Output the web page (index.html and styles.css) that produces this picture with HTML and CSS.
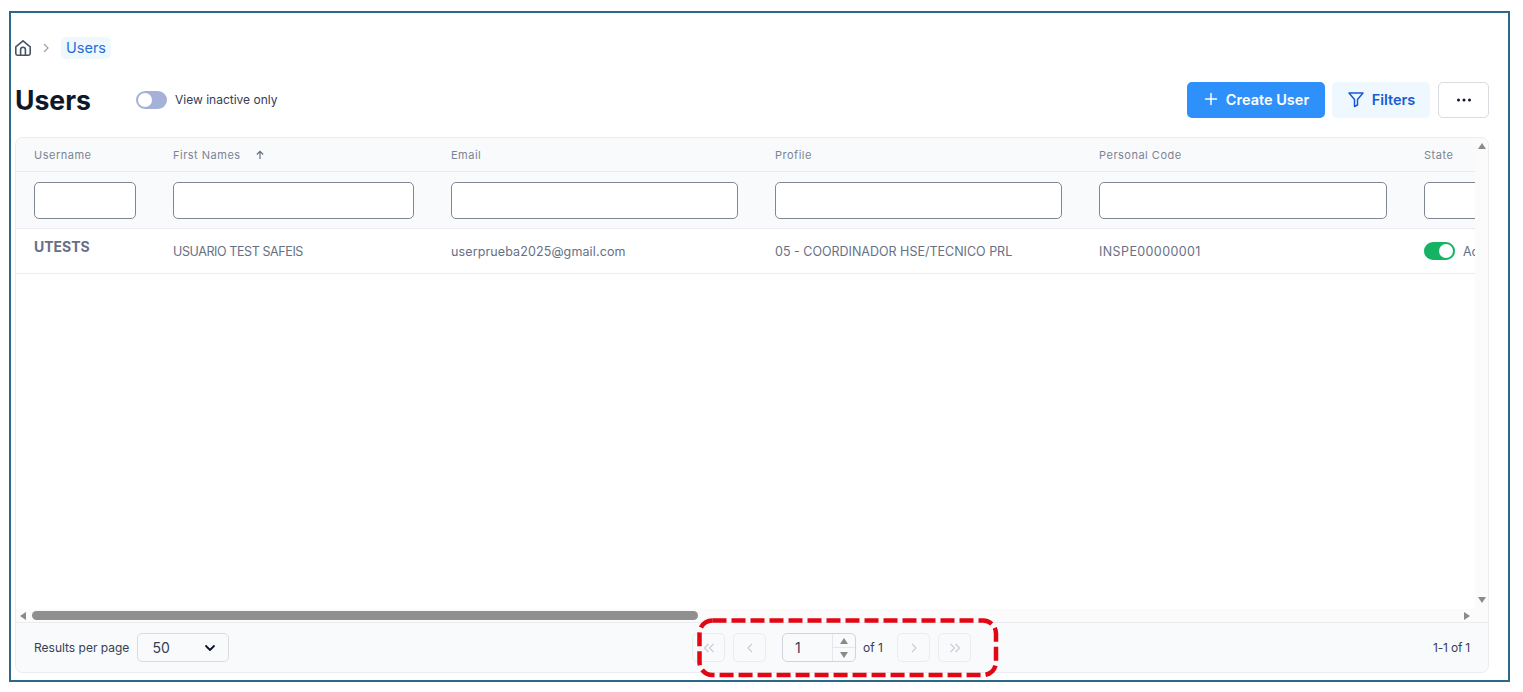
FILE: index.html
```html
<!DOCTYPE html>
<html>

<head>
    <meta charset="UTF-8">
    <meta name="viewport" content="width=device-width, initial-scale=1.0">
    <link rel="stylesheet" href="styles.css">
    <title>Users</title>
</head>

<body>
    <div class="frame">
        <nav class="crumbs">
            <svg class="home" width="16" height="16" viewBox="2 2 20 20" fill="none" stroke="#475467" stroke-width="2" stroke-linecap="round" stroke-linejoin="round">
                <path d="M3 10.5 12 3l9 7.5V19a2 2 0 0 1-2 2H5a2 2 0 0 1-2-2z" />
                <path d="M9 21v-7a3 3 0 0 1 6 0v7" />
            </svg>
            <svg class="crumb-sep" width="10" height="10" viewBox="0 0 10 10" fill="none" stroke="#98a2b3" stroke-width="1.2">
                <path d="M3 1l4 4-4 4" />
            </svg>
            <span class="crumb-current">Users</span>
        </nav>

        <header class="page-head">
            <h1>Users</h1>
            <label class="inactive">
                <span class="switch"><span class="knob"></span></span>
                <span class="inactive-text">View inactive only</span>
            </label>
            <div class="actions">
                <button class="btn btn-primary">
                    <svg width="16" height="16" viewBox="0 0 16 16" fill="none" stroke="#fff" stroke-width="1.5" stroke-linecap="round">
                        <path d="M8 2.5v11M2.5 8h11" />
                    </svg>
                    Create User
                </button>
                <button class="btn btn-soft">
                    <svg width="18" height="18" viewBox="0 0 18 18" fill="none" stroke="#175cd3" stroke-width="1.5" stroke-linejoin="round">
                        <path d="M2 3h14l-5.5 6.5V15l-3 1.500V9.500z" />
                    </svg>
                    Filters
                </button>
                <button class="btn btn-more">
                    <svg width="16" height="4" viewBox="0 0 16 4" fill="#101828">
                        <circle cx="2.500" cy="2" r="1.500" />
                        <circle cx="8" cy="2" r="1.500" />
                        <circle cx="13.500" cy="2" r="1.500" />
                    </svg>
                </button>
            </div>
        </header>

        <section class="card">
            <div class="card-body">
                <div class="table-view">
                    <div class="row row-head">
                        <div class="cell">Username</div>
                        <div class="cell">First Names
                            <svg class="sort" width="10" height="10" viewBox="0 0 10 10" fill="none" stroke="#667085" stroke-width="1.200">
                                <path d="M5 9V1.500M1.800 4.500 5 1.300l3.200 3.200" />
                            </svg>
                        </div>
                        <div class="cell">Email</div>
                        <div class="cell">Profile</div>
                        <div class="cell">Personal Code</div>
                        <div class="cell">State</div>
                    </div>
                    <div class="row row-filter">
                        <div class="cell"><input class="filter" type="text"></div>
                        <div class="cell"><input class="filter" type="text"></div>
                        <div class="cell"><input class="filter" type="text"></div>
                        <div class="cell"><input class="filter" type="text"></div>
                        <div class="cell"><input class="filter" type="text"></div>
                        <div class="cell"><input class="filter" type="text"></div>
                    </div>
                    <div class="row row-data">
                        <div class="cell cell-user">UTESTS</div>
                        <div class="cell cell-name">USUARIO TEST SAFEIS</div>
                        <div class="cell cell-email">userprueba2025@gmail.com</div>
                        <div class="cell">05 - COORDINADOR HSE/TECNICO PRL</div>
                        <div class="cell cell-code">INSPE00000001</div>
                        <div class="cell cell-state">
                            <span class="switch switch-on"><span class="knob"></span></span>
                            Active
                        </div>
                    </div>
                </div>

                <div class="vbar">
                    <span class="arrow arrow-up"></span>
                    <span class="arrow arrow-down"></span>
                </div>
                <div class="hbar">
                    <span class="arrow arrow-left"></span>
                    <span class="hthumb"></span>
                    <span class="arrow arrow-right"></span>
                </div>
            </div>

            <footer class="card-foot">
                <div class="per-page">
                    Results per page
                    <div class="select">
                        50
                        <svg width="12" height="8" viewBox="0 0 12 8" fill="none" stroke="#101828" stroke-width="1.800" stroke-linecap="round" stroke-linejoin="round">
                            <path d="M2 2l4 4 4-4" />
                        </svg>
                    </div>
                </div>
                <div class="pager">
                    <span class="page-btn">
                        <svg width="12" height="10" viewBox="0 0 12 10" fill="none" stroke="#c9ced6" stroke-width="1.200"><path d="M5.500 1 1.500 5l4 4M10.500 1l-4 4 4 4" /></svg>
                    </span>
                    <span class="page-btn page-gap">
                        <svg width="8" height="10" viewBox="0 0 8 10" fill="none" stroke="#c9ced6" stroke-width="1.200"><path d="M6 1 2 5l4 4" /></svg>
                    </span>
                    <div class="page-input">
                        <span class="page-num">1</span>
                        <div class="spin">
                            <span class="spin-part"><span class="arrow arrow-up"></span></span>
                            <span class="spin-part"><span class="arrow arrow-down"></span></span>
                        </div>
                    </div>
                    <span class="page-of">of 1</span>
                    <span class="page-btn">
                        <svg width="8" height="10" viewBox="0 0 8 10" fill="none" stroke="#c9ced6" stroke-width="1.200"><path d="M2 1l4 4-4 4" /></svg>
                    </span>
                    <span class="page-btn page-gap">
                        <svg width="12" height="10" viewBox="0 0 12 10" fill="none" stroke="#c9ced6" stroke-width="1.200"><path d="M1.500 1l4 4-4 4M6.500 1l4 4-4 4" /></svg>
                    </span>
                </div>
                <div class="count">1-1 of 1</div>
            </footer>
        </section>
    </div>

    <!-- annotation over the pager -->
    <svg class="callout" width="302" height="60" viewBox="0 0 302 60" fill="none">
        <rect x="2.500" y="2.500" width="296.500" height="54.500" rx="13" stroke="#e30613" stroke-width="4.500" stroke-dasharray="14 5" />
    </svg>
</body>

</html>
```

FILE: styles.css
```css
html,
body {
    width: 100%;
    height: 100%;
    margin: 0;
    padding: 0;
    background-color: #fff;
    overflow: hidden;
}

body {
    position: relative;
    font-family: "Inter", "Liberation Sans", sans-serif;
    color: #101828;
}

.frame {
    box-sizing: border-box;
    display: flex;
    flex-direction: column;
    width: 1501px;
    height: 671px;
    margin: 11px 0 0 9px;
    padding: 0 19px 7px 4px;
    border: 2px solid #2b6a86;
}

/* breadcrumb */
.crumbs {
    display: flex;
    align-items: center;
    height: 22px;
    margin-top: 24px;
}

.crumb-sep {
    margin: 0 10px;
}

.crumb-current {
    padding: 2px 5px;
    border-radius: 5px;
    background-color: #eff8ff;
    color: #1f6fd6;
    font-size: 14.500px;
    line-height: 18px;
}

/* title row */
.page-head {
    display: flex;
    align-items: center;
    height: 36px;
    margin-top: 23px;
}

.page-head h1 {
    width: 121px;
    margin: 0;
    font-size: 26.600px;
    font-weight: 700;
    line-height: 36px;
}

.inactive {
    display: flex;
    align-items: center;
    gap: 8px;
    font-size: 12px;
    color: #344054;
}

.inactive-text {
    margin-bottom: 2px;
}

.switch {
    box-sizing: border-box;
    display: flex;
    align-items: center;
    width: 31px;
    height: 18px;
    padding: 2px;
    border-radius: 9px;
    background-color: #a5b1d8;
}

.knob {
    width: 14px;
    height: 14px;
    border-radius: 50%;
    background-color: #fff;
}

.switch-on {
    justify-content: flex-end;
    background-color: #16b364;
}

.actions {
    display: flex;
    gap: 7px;
    margin-left: auto;
}

.btn {
    display: flex;
    align-items: center;
    justify-content: center;
    gap: 7px;
    box-sizing: border-box;
    height: 36px;
    padding: 0 0 2px;
    border: 0;
    border-radius: 5px;
    font-family: inherit;
    font-size: 14.500px;
    font-weight: 600;
}

.btn-primary {
    width: 138px;
    background-color: #2e90fa;
    color: #fff;
}

.btn-soft {
    width: 98px;
    background-color: #eff8ff;
    color: #175cd3;
}

.btn-more {
    width: 51px;
    margin-left: 1px;
    padding: 0;
    border: 1px solid #d9dce1;
    background-color: #fff;
}

/* table card */
.card {
    box-sizing: border-box;
    flex: 1;
    display: flex;
    flex-direction: column;
    min-height: 0;
    margin-top: 19px;
    border: 1px solid #eaecf0;
    border-radius: 8px;
    overflow: hidden;
}

.card-body {
    flex: 1;
    display: grid;
    grid-template-columns: 1fr 13px;
    grid-template-rows: 1fr 13px;
    min-height: 0;
}

.table-view {
    min-width: 0;
    overflow: hidden;
}

.row {
    display: grid;
    grid-template-columns: 157px 278px 324px 324px 325px 120px;
    box-sizing: border-box;
    border-bottom: 1px solid #eaecf0;
}

.cell {
    box-sizing: border-box;
    display: flex;
    align-items: center;
    min-width: 0;
    padding-right: 37px;
    white-space: nowrap;
}

.row .cell:first-child {
    padding-left: 18px;
}

.row-head {
    height: 34px;
    background-color: #f9fafb;
    font-size: 11px;
    letter-spacing: 0.5px;
    color: #7b8494;
}

.sort {
    margin-left: 14px;
}

.row-filter {
    height: 57px;
    background-color: #f9fafb;
}

.filter {
    box-sizing: border-box;
    width: 100%;
    height: 37px;
    border: 1px solid #7f8794;
    border-radius: 5px;
    background-color: #fff;
}

.row-data {
    height: 45px;
    font-size: 12.500px;
    color: #667085;
}

.cell-user {
    align-self: start;
    padding-top: 9px;
    font-size: 14px;
    font-weight: 700;
}

.cell-name {
    letter-spacing: -0.4px;
}

.cell-email {
    letter-spacing: 0.12px;
}

.cell-code {
    letter-spacing: 0.4px;
}

.cell-state {
    gap: 8px;
}

/* drawn scrollbars */
.vbar {
    grid-row: 1 / 3;
    grid-column: 2;
    display: flex;
    flex-direction: column;
    justify-content: space-between;
    align-items: center;
    padding: 5px 0 19px;
    background-color: #fbfbfc;
}

.hbar {
    grid-row: 2;
    grid-column: 1;
    display: flex;
    align-items: center;
    padding: 0 5px 0 4px;
    background-color: #fbfbfc;
}

.hthumb {
    width: 666px;
    height: 9px;
    margin-left: 6px;
    border-radius: 5px;
    background-color: #8f8f8f;
}

.arrow {
    display: block;
    width: 0;
    height: 0;
    border-style: solid;
    border-color: transparent;
}

.arrow-up {
    border-width: 0 4.500px 6px;
    border-bottom-color: #8a8a8a;
}

.arrow-down {
    border-width: 6px 4.500px 0;
    border-top-color: #8a8a8a;
}

.arrow-left {
    border-width: 4.500px 6px 4.500px 0;
    border-right-color: #8a8a8a;
}

.arrow-right {
    margin-left: auto;
    border-width: 4.500px 0 4.500px 6px;
    border-left-color: #8a8a8a;
}

/* footer */
.card-foot {
    display: flex;
    align-items: center;
    height: 49px;
    padding: 0 18px;
    border-top: 1px solid #eaecf0;
    background-color: #f9fafb;
    font-size: 12px;
    color: #344054;
}

.per-page {
    flex: 0 0 658px;
    display: flex;
    align-items: center;
    gap: 8px;
}

.select {
    box-sizing: border-box;
    display: flex;
    align-items: center;
    justify-content: space-between;
    width: 92px;
    height: 29px;
    padding: 0 12px 0 14px;
    border: 1px solid #d9dce1;
    border-radius: 5px;
    font-size: 14px;
}

.pager {
    display: flex;
    align-items: center;
}

.page-btn {
    box-sizing: border-box;
    display: flex;
    align-items: center;
    justify-content: center;
    width: 33px;
    height: 29px;
    border: 1px solid #eaecf0;
    border-radius: 5px;
}

.page-gap {
    margin-left: 8px;
}

.page-input {
    box-sizing: border-box;
    display: flex;
    width: 74px;
    height: 29px;
    margin: 0 7px 0 16px;
    border: 1px solid #d0d5dd;
    border-radius: 5px;
}

.page-num {
    flex: 1;
    align-self: center;
    padding-left: 12px;
    font-size: 14px;
}

.spin {
    display: flex;
    flex-direction: column;
    width: 22px;
    border-left: 1px solid #e4e7ec;
}

.spin-part {
    flex: 1;
    display: flex;
    align-items: center;
    justify-content: center;
}

.spin-part:first-child {
    border-bottom: 1px solid #e4e7ec;
}

.page-of {
    width: 34px;
}

.count {
    margin-left: auto;
    letter-spacing: -0.2px;
}

.callout {
    position: absolute;
    left: 697px;
    top: 618px;
}
```
